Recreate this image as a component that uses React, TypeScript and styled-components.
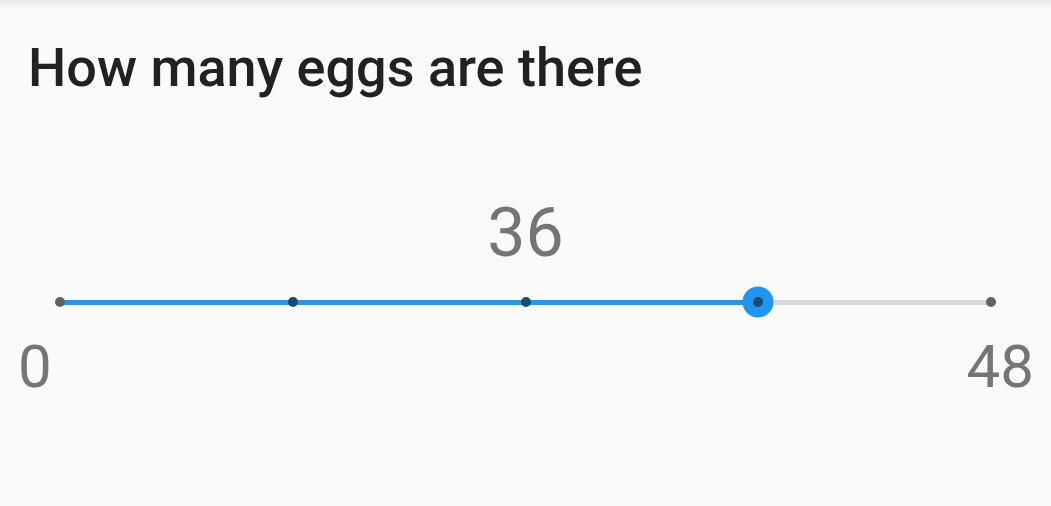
import React from 'react'
import styled, {createGlobalStyle} from 'styled-components'

const GlobalStyle = createGlobalStyle`
  html, body {
    margin: 0;
    padding: 0;
    background: #fafafa;
  }
  body {
    font-family: Roboto, "Noto Sans", sans-serif;
  }
`

const MIN = 0
const MAX = 48
const VALUE = 36
const DIVISIONS = 4

export default function App() {
  const pct = ((VALUE - MIN) / (MAX - MIN)) * 100
  const ticks = Array.from({length: DIVISIONS + 1}, (_, i) => (i / DIVISIONS) * 100)

  return (
    <Page>
      <GlobalStyle />
      <TopShade />
      <Title>How many eggs are there</Title>
      <SliderBlock>
        <ValueLabel>{VALUE}</ValueLabel>
        <TrackArea>
          <Track>
            <Fill style={{width: `${pct}%`}} />
          </Track>
          <Thumb style={{left: `${pct}%`}} />
          <Ticks>
            {ticks.map((t, i) => (
              <Tick key={i} $active={t > 0 && t <= pct} />
            ))}
          </Ticks>
        </TrackArea>
      </SliderBlock>
      <RangeLabels>
        <span>{MIN}</span>
        <span>{MAX}</span>
      </RangeLabels>
    </Page>
  )
}

const Page = styled.div`
  width: 1051px;
  height: 506px;
  display: flex;
  flex-direction: column;
  background: #fafafa;
  overflow: hidden;
`

const TopShade = styled.div`
  height: 9px;
  flex: none;
  background: linear-gradient(to bottom, rgba(0, 0, 0, 0.08), rgba(0, 0, 0, 0));
`

const Title = styled.h1`
  margin: 32px 0 0 28px;
  font-family: Roboto, sans-serif;
  font-weight: 500;
  font-size: 54px;
  line-height: 54px;
  color: #212121;
`

const SliderBlock = styled.div`
  display: flex;
  flex-direction: column;
  padding: 0 60px;
`

const ValueLabel = styled.div`
  margin-top: 104px;
  text-align: center;
  font-family: Roboto, sans-serif;
  font-size: 68px;
  line-height: 68px;
  color: #757575;
`

const TrackArea = styled.div`
  position: relative;
  margin-top: 19px;
  height: 32px;
  display: flex;
  align-items: center;
`

const Track = styled.div`
  width: 100%;
  height: 5px;
  background: #d9d9d9;
  display: flex;
`

const Fill = styled.div`
  height: 100%;
  background: #3093dd;
`

const Thumb = styled.div`
  position: absolute;
  top: 50%;
  width: 31px;
  height: 31px;
  border-radius: 50%;
  background: #2196f0;
  transform: translate(-50%, -50%);
`

const Ticks = styled.div`
  position: absolute;
  left: -5px;
  right: -5px;
  top: 50%;
  transform: translateY(-50%);
  display: flex;
  justify-content: space-between;
`

const Tick = styled.div<{$active: boolean}>`
  width: 10px;
  height: 10px;
  border-radius: 50%;
  background: ${p => (p.$active ? '#1c4a72' : '#5f6368')};
`

const RangeLabels = styled.div`
  margin-top: 19px;
  padding: 0 17px 0 18px;
  display: flex;
  justify-content: space-between;
  font-family: Roboto, sans-serif;
  font-size: 60px;
  line-height: 60px;
  color: #757575;
`
